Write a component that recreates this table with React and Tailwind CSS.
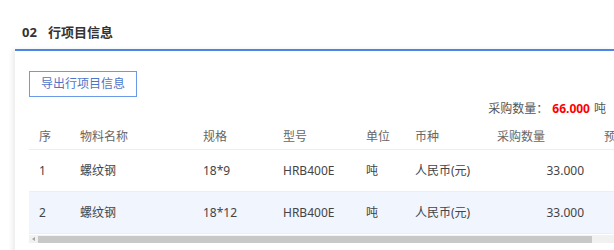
import React from 'react';

const columns = [
  { key: 'idx', label: '序', w: 'w-[41px]' },
  { key: 'name', label: '物料名称', w: 'w-[123px]' },
  { key: 'spec', label: '规格', w: 'w-[80px]' },
  { key: 'model', label: '型号', w: 'w-[83px]' },
  { key: 'unit', label: '单位', w: 'w-[49px]' },
  { key: 'currency', label: '币种', w: 'w-[82px]' },
  { key: 'qty', label: '采购数量', w: 'w-[107px]', right: true },
  { key: 'price', label: '预计单价', w: 'w-[100px]' },
];

const rows = [
  { idx: '1', name: '螺纹钢', spec: '18*9', model: 'HRB400E', unit: '吨', currency: '人民币(元)', qty: '33.000', price: '' },
  { idx: '2', name: '螺纹钢', spec: '18*12', model: 'HRB400E', unit: '吨', currency: '人民币(元)', qty: '33.000', price: '' },
];

const App = () => {
  return (
    <div className="w-[614px] h-[250px] overflow-hidden bg-white font-['Noto_Sans','Noto_Sans_CJK_SC',sans-serif] text-[12px]">
      {/* section title */}
      <div className="h-[49px] pl-[22px] pt-[23px]">
        <div className="flex items-center leading-[18px] text-[13px] font-bold text-[#333]">
          <span>02</span>
          <span className="ml-[11px]">行项目信息</span>
        </div>
      </div>

      <div className="ml-[15px] border-t-2 border-[#4a86e8] bg-white shadow-[-3px_0_4px_rgba(0,0,0,0.07)] pl-[14px] pt-[20px] h-[210px]">
        <button
          type="button"
          className="h-[26px] w-[108px] border border-[#6b9be8] text-[#4f74c9] text-[12px] leading-[24px] bg-white"
        >
          导出行项目信息
        </button>

        <div className="mt-[3px] h-[18px] flex justify-end items-center pr-[8px] leading-[18px] text-[#555]">
          <span>采购数量：</span>
          <span className="ml-[4px] font-bold text-[#ff0000]">66.000</span>
          <span className="ml-[4px]">吨</span>
        </div>

        <div className="w-[700px]">
          {/* header */}
          <div className="flex h-[32px] pt-[7px] items-center border-b border-[#ebeef5] text-[#666]">
            {columns.map(c => (
              <div key={c.key} className={`${c.w} shrink-0 pl-[10px] whitespace-nowrap`}>
                {c.label}
              </div>
            ))}
          </div>

          {rows.map((r, i) => (
            <div
              key={r.idx}
              className={`flex items-center border-b border-[#ebeef5] text-[#444] h-[42px] ${i === 1 ? 'bg-[#f0f5fe]' : 'bg-white'}`}
            >
              {columns.map(c => (
                <div
                  key={c.key}
                  className={`${c.w} shrink-0 whitespace-nowrap ${c.right ? 'text-right pr-[10px]' : 'pl-[10px]'}`}
                >
                  {r[c.key]}
                </div>
              ))}
            </div>
          ))}

          {/* horizontal scrollbar */}
          <div className="mt-[1px] h-[8px] w-[600px] bg-[#f1f1f1] flex items-center">
            <div className="w-[9px] h-full flex items-center justify-center">
              <div className="w-0 h-0 border-y-[2px] border-y-transparent border-r-[3px] border-r-[#a3a3a3]" />
            </div>
            <div className="h-[7px] w-[554px] bg-[#c8c8c8]" />
          </div>
        </div>
      </div>
    </div>
  );
};

export default App;
